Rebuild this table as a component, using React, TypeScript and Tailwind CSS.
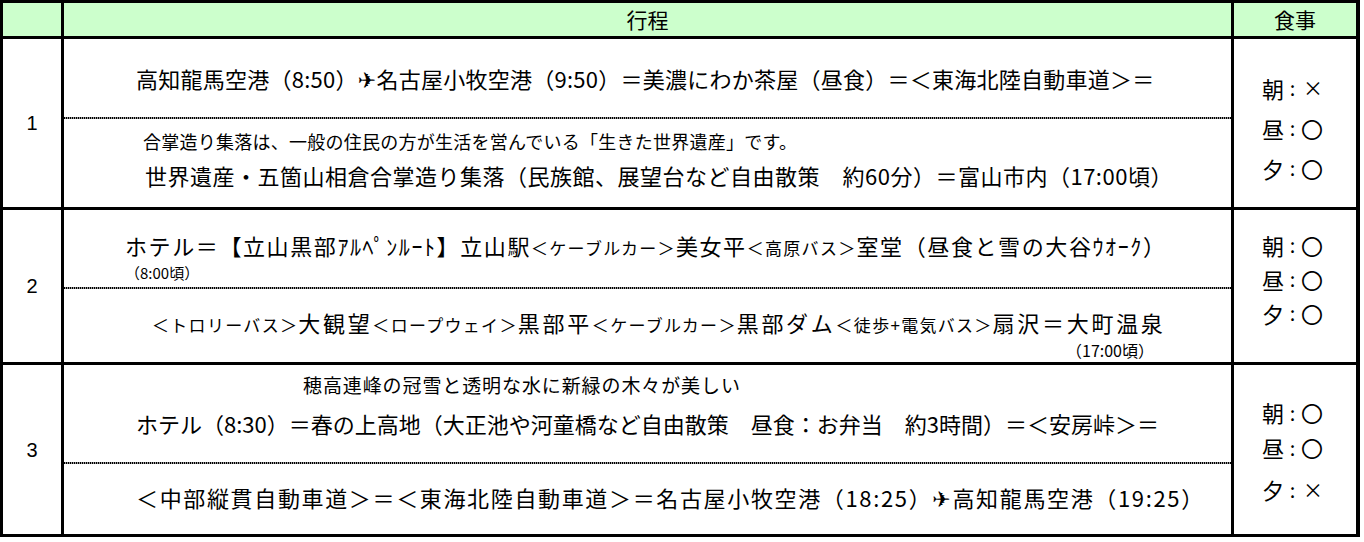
import React from 'react';

const jp = { fontFamily: '"Noto Sans CJK JP", "DejaVu Sans", sans-serif' };

const Dots = () => (
  <div className="h-[2px] w-full bg-[repeating-linear-gradient(90deg,#000_0_1px,#999_1px_2px)]" />
);

// smaller type for the transport names in day 2
const Small = ({ children }: { children: React.ReactNode }) => (
  <span className="text-[17px] tracking-[1.3px]">{children}</span>
);

const Meal = ({ label, mark, className = '' }: { label: string; mark: string; className?: string }) => (
  <div className={`flex items-center ${className}`}>
    <span className="text-[22px]">{label}</span>
    <span className="text-[20px] w-[17px] text-center">:</span>
    <span className={mark === '×' ? 'text-[20px] ml-[2px]' : 'text-[22px]'}>{mark}</span>
  </div>
);

export default function App() {
  return (
    <div className="w-[1364px] h-[542px] bg-white text-black" style={jp}>
      <div className="w-[1360px] grid grid-cols-[58px_1167px_122px] grid-rows-[33px_168px_152px_169px] gap-[3px] border-[3px] border-black bg-black">
        {/* header */}
        <div className="bg-[#ccffcc]" />
        <div className="bg-[#ccffcc] flex items-center justify-center text-[21px]">行程</div>
        <div className="bg-[#ccffcc] flex items-center justify-center text-[21px]">食事</div>

        {/* day 1 */}
        <div className="bg-white flex items-center justify-center text-[20px] font-['Liberation_Sans']">1</div>
        <div className="bg-white flex flex-col">
          <div className="h-[78px] flex items-center pl-[72px] text-[22px] tracking-[0.25px] whitespace-nowrap">
            高知龍馬空港（8:50）✈名古屋小牧空港（9:50）＝美濃にわか茶屋（昼食）＝＜東海北陸自動車道＞＝
          </div>
          <Dots />
          <div className="mt-[10px] pl-[79px] text-[18px] tracking-[0.25px] leading-[24px] whitespace-nowrap">
            合掌造り集落は、一般の住民の方が生活を営んでいる「生きた世界遺産」です。
          </div>
          <div className="mt-[6px] pl-[81px] text-[22px] tracking-[0.5px] leading-[32px] whitespace-nowrap">
            世界遺産・五箇山相倉合掌造り集落（民族館、展望台など自由散策　約60分）＝富山市内（17:00頃）
          </div>
        </div>
        <div className="bg-white pt-[29px] pl-[28px] flex flex-col [&>div]:h-[40px]">
          <Meal label="朝" mark="×" />
          <Meal label="昼" mark="〇" />
          <Meal label="夕" mark="〇" />
        </div>

        {/* day 2 */}
        <div className="bg-white flex items-center justify-center text-[20px] font-['Liberation_Sans']">2</div>
        <div className="bg-white flex flex-col">
          <div className="h-[77px] pl-[61px] pt-[20px]">
            <div className="text-[22px] tracking-[1.6px] leading-[30px] whitespace-nowrap">
              ホテル＝【立山黒部ｱﾙﾍﾟﾝﾙｰﾄ】立山駅<Small>＜ケーブルカー＞</Small>美女平<Small>＜高原バス＞</Small>室堂（昼食と雪の大谷ｳｵｰｸ）
            </div>
            <div className="text-[15px] leading-[20px]">（8:00頃）</div>
          </div>
          <Dots />
          <div className="mt-[18px] pl-[88px] text-[22px] tracking-[2.7px] leading-[30px] whitespace-nowrap">
            <Small>＜トロリーバス＞</Small>大観望<Small>＜ロープウェイ＞</Small>黒部平<Small>＜ケーブルカー＞</Small>黒部ダム<Small>＜徒歩+電気バス＞</Small>扇沢＝大町温泉
          </div>
          <div className="pl-[1002px] text-[16px] leading-[20px] whitespace-nowrap">（17:00頃）</div>
        </div>
        <div className="bg-white pt-[18px] pl-[28px] flex flex-col [&>div]:h-[34px]">
          <Meal label="朝" mark="〇" />
          <Meal label="昼" mark="〇" />
          <Meal label="夕" mark="〇" />
        </div>

        {/* day 3 */}
        <div className="bg-white flex items-center justify-center text-[20px] font-['Liberation_Sans']">3</div>
        <div className="bg-white flex flex-col">
          <div className="h-[97px]">
            <div className="mt-[8px] pl-[239px] text-[19px] tracking-[0.9px] leading-[24px] whitespace-nowrap">
              穂高連峰の冠雪と透明な水に新緑の木々が美しい
            </div>
            <div className="mt-[10px] pl-[72px] text-[22px] leading-[32px] whitespace-nowrap">
              ホテル（8:30）＝春の上高地（大正池や河童橋など自由散策　昼食：お弁当　約3時間）＝＜安房峠＞＝
            </div>
          </div>
          <Dots />
          <div className="mt-[17px] pl-[72px] text-[22px] tracking-[1.65px] leading-[32px] whitespace-nowrap">
            ＜中部縦貫自動車道＞＝＜東海北陸自動車道＞＝名古屋小牧空港（18:25）✈高知龍馬空港（19:25）
          </div>
        </div>
        <div className="bg-white pt-[30px] pl-[28px] flex flex-col [&>div]:h-[35px]">
          <Meal label="朝" mark="〇" />
          <Meal label="昼" mark="〇" />
          <Meal label="夕" mark="×" className="mt-[7px]" />
        </div>
      </div>
    </div>
  );
}
